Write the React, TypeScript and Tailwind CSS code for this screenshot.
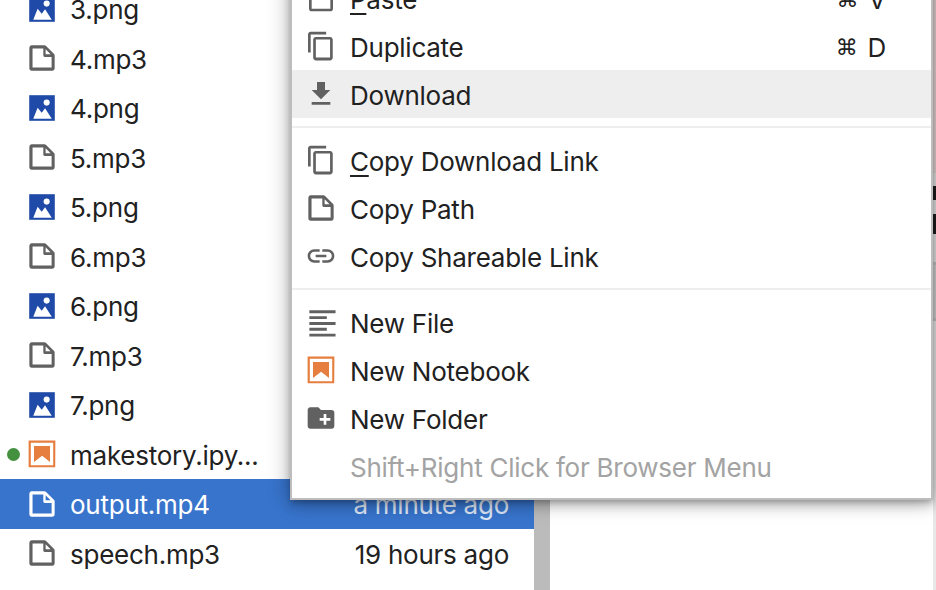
const textFont = "font-['Inter','Liberation_Sans',sans-serif]";

function FileIcon({ className = "fill-[#616161]" }: { className?: string }) {
  return (
    <svg viewBox="0 0 22 22" className={`w-8 h-8 shrink-0 ${className}`}>
      <path d="M19.3 8.2l-5.5-5.5c-.3-.3-.7-.5-1.2-.5H3.9c-.8.1-1.6.9-1.6 1.8v14.1c0 .9.7 1.6 1.6 1.6h14.2c.9 0 1.6-.7 1.6-1.6V9.4c.1-.5-.1-.9-.4-1.2zm-5.8-3.3l3.4 3.6h-3.4V5zm3.9 12.7H4.7c-.1 0-.2 0-.2-.2V4.7c0-.1.1-.2.2-.2h7.2v4.4s0 .8.3 1.1c.3.3 1.1.3 1.1.3h4.3v7.2s-.1.2-.2.2z" />
    </svg>
  );
}

function ImageIcon() {
  return (
    <svg viewBox="0 0 22 22" className="w-8 h-8 shrink-0">
      <path fill="#1f4aa8" d="M2.2 2.2h17.6v17.6H2.2z" />
      <circle fill="#fff" cx="14.2" cy="7.3" r="2.1" />
      <path fill="#fff" d="M5 18.4l3-7.6 2.8 3.4 2.3-3 4.6 7.2z" />
    </svg>
  );
}

function NotebookIcon() {
  return (
    <svg viewBox="0 0 22 22" className="w-8 h-8 shrink-0 fill-[#e57e3e]">
      <path d="M18.7 3.3v15.4H3.3V3.3h15.4m1.5-1.5H1.8v18.3h18.3l.1-18.3z" />
      <path d="M16.5 16.5l-5.4-4.3-5.6 4.3v-11h11z" />
    </svg>
  );
}

function CopyIcon() {
  return (
    <svg viewBox="0 0 18 18" className="w-8 h-8 shrink-0 fill-[#616161]">
      <path d="M11.9,1H3.2C2.4,1,1.7,1.7,1.7,2.5v10.2h1.5V2.5h8.7V1z M14.1,3.9h-8c-0.8,0-1.5,0.7-1.5,1.5v10.2c0,0.8,0.7,1.5,1.5,1.5h8c0.8,0,1.5-0.7,1.5-1.5V5.4C15.6,4.6,14.9,3.9,14.1,3.9z M14.1,15.5h-8V5.4h8V15.5z" />
    </svg>
  );
}

function Glyph({ d, box = "0 0 24 24" }: { d: string; box?: string }) {
  return (
    <svg viewBox={box} className="w-8 h-8 shrink-0 fill-[#616161]">
      <path d={d} />
    </svg>
  );
}

const files = [
  { name: "3.png", kind: "image" },
  { name: "4.mp3", kind: "file" },
  { name: "4.png", kind: "image" },
  { name: "5.mp3", kind: "file" },
  { name: "5.png", kind: "image" },
  { name: "6.mp3", kind: "file" },
  { name: "6.png", kind: "image" },
  { name: "7.mp3", kind: "file" },
  { name: "7.png", kind: "image" },
  { name: "makestory.ipy...", kind: "notebook", running: true },
  { name: "output.mp4", kind: "file", selected: true, modified: "a minute ago" },
  { name: "speech.mp3", kind: "file", modified: "19 hours ago" },
];

function MenuItem({ icon, label, mnemonic, shortcut, active, disabled }: {
  icon?: React.ReactNode;
  label: string;
  mnemonic?: boolean;
  shortcut?: string;
  active?: boolean;
  disabled?: boolean;
}) {
  return (
    <div className={`h-12 flex items-center pl-[13px] pr-[45px] ${active ? "bg-[#eeeeee]" : ""}`}>
      <div className="w-8 h-8 shrink-0">{icon}</div>
      <div className={`ml-[13px] flex-1 pt-[2px] ${disabled ? "text-[#a3a3a3]" : ""}`}>
        {mnemonic ? (
          <>
            <u className="underline-offset-[4px] decoration-2">{label[0]}</u>
            {label.slice(1)}
          </>
        ) : (
          label
        )}
      </div>
      {shortcut && (
        <div className="flex items-center gap-[10px] pt-[2px]">
          <span className="font-['DejaVu_Sans',sans-serif] text-[22px]">⌘</span>
          <span>{shortcut}</span>
        </div>
      )}
    </div>
  );
}

export default function App() {
  return (
    <div className={`relative w-[936px] h-[590px] overflow-hidden bg-white text-[#212121] text-[26px] tracking-[-0.25px] ${textFont}`}>
      <div className="flex h-[590px]">
        <div className="w-[534px] shrink-0 -mt-[16px]">
          {files.map((f) => (
            <div
              key={f.name}
              className={`relative h-[49.5px] flex items-center pl-[26px] pr-[25px] ${f.selected ? "bg-[#3874cc] text-white" : ""}`}
            >
              {f.running && <div className="absolute left-[7px] top-[18px] w-[13px] h-[13px] rounded-full bg-[#43903f]" />}
              {f.kind === "image" && <ImageIcon />}
              {f.kind === "notebook" && <NotebookIcon />}
              {f.kind === "file" && <FileIcon className={f.selected ? "fill-white" : "fill-[#616161]"} />}
              <span className="ml-[12px] flex-1 pt-[2px]">{f.name}</span>
              {f.modified && <span className={`pt-[2px] ${f.selected ? "text-[#dde6f5]" : ""}`}>{f.modified}</span>}
            </div>
          ))}
        </div>
        <div className="w-4 shrink-0 bg-[#bbbbbb]" />
        <div className="flex-1" />
        <div className="w-[3px] shrink-0 flex flex-col">
          <div className="h-[173px] bg-[#e3d3d3]" />
          <div className="h-[13px] bg-[#e4e4e4]" />
          <div className="h-[14px] bg-[#1f1f1f]" />
          <div className="h-[14px] bg-[#e4e4e4]" />
          <div className="h-[20px] bg-[#1f1f1f]" />
          <div className="h-[28px] bg-[#e4e4e4]" />
          <div className="h-[3px] bg-[#c4c4c4]" />
          <div className="h-[53px] bg-[#d0d0d0]" />
          <div className="h-[3px] bg-[#c4c4c4]" />
          <div className="flex-1 bg-[#e8e8e8]" />
        </div>
      </div>

      <div className="absolute left-[290px] top-[-26px] w-[643px] bg-white border-2 border-t-0 border-[#bdbdbd] shadow-[0_3px_5px_-1px_rgba(0,0,0,0.2),0_6px_10px_0_rgba(0,0,0,0.14),0_1px_18px_0_rgba(0,0,0,0.12),0_0_24px_rgba(0,0,0,0.2)]">
        <MenuItem
          icon={<Glyph d="M19,2h-4.18C14.4,0.84,13.3,0,12,0c-1.3,0-2.4,0.84-2.82,2H5C3.9,2,3,2.9,3,4v16c0,1.1,0.9,2,2,2h14c1.1,0,2-0.9,2-2V4C21,2.9,20.1,2,19,2z M12,2c0.55,0,1,0.45,1,1s-0.45,1-1,1s-1-0.45-1-1S11.45,2,12,2z M19,20H5V4h2v3h10V4h2V20z" />}
          label="Paste"
          mnemonic
          shortcut="V"
        />
        <MenuItem icon={<CopyIcon />} label="Duplicate" shortcut="D" />
        <MenuItem icon={<Glyph d="M19,9h-4V3H9v6H5l7,7L19,9z M5,18v2h14v-2H5z" />} label="Download" active />
        <div className="h-[2px] my-2 bg-[#eeeeee]" />
        <MenuItem icon={<CopyIcon />} label="Copy Download Link" mnemonic />
        <MenuItem icon={<FileIcon />} label="Copy Path" />
        <MenuItem
          icon={<Glyph d="M3.9 12c0-1.71 1.39-3.1 3.1-3.1h4V7H7c-2.76 0-5 2.24-5 5s2.24 5 5 5h4v-1.9H7c-1.71 0-3.1-1.39-3.1-3.1zM8 13h8v-2H8v2zm9-6h-4v1.9h4c1.71 0 3.1 1.39 3.1 3.1s-1.39 3.1-3.1 3.1h-4V17h4c2.76 0 5-2.24 5-5s-2.24-5-5-5z" />}
          label="Copy Shareable Link"
        />
        <div className="h-[2px] my-2 bg-[#eeeeee]" />
        <MenuItem icon={<Glyph box="0 0 22 22" d="M15 15H3v2h12v-2zm0-8H3v2h12V7zM3 13h18v-2H3v2zm0 8h18v-2H3v2zM3 3v2h18V3H3z" />} label="New File" />
        <MenuItem icon={<NotebookIcon />} label="New Notebook" />
        <MenuItem
          icon={<Glyph d="M20 6h-8l-2-2H4c-1.11 0-1.99.89-1.99 2L2 18c0 1.11.89 2 2 2h16c1.11 0 2-.89 2-2V8c0-1.11-.89-2-2-2zm-1 8h-3v3h-2v-3h-3v-2h3V9h2v3h3v2z" />}
          label="New Folder"
        />
        <MenuItem label="Shift+Right Click for Browser Menu" disabled />
        <div className="h-[8px]" />
      </div>
    </div>
  );
}
